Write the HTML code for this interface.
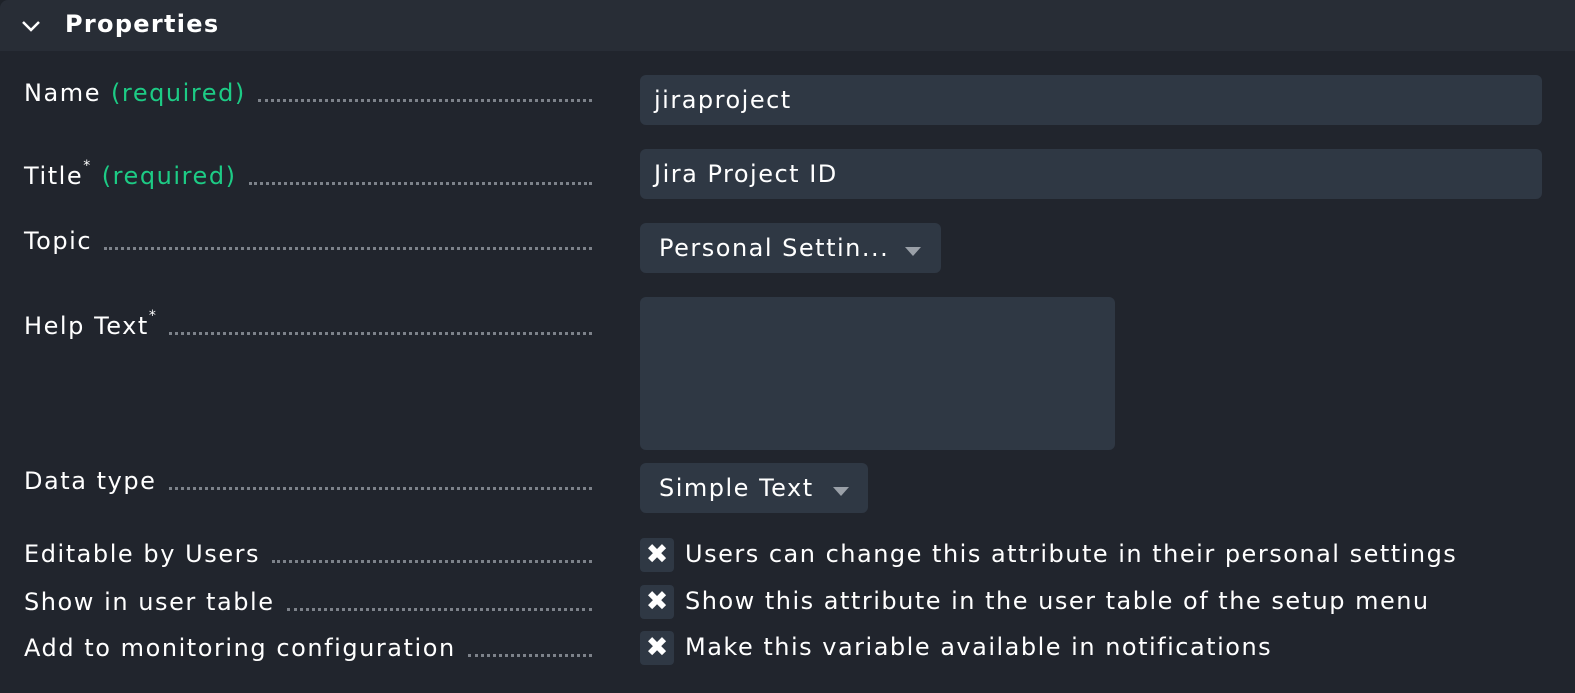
<!DOCTYPE html>
<html><head><style>
body{margin:0;background:#1e2229;width:1575px;height:693px;overflow:hidden;font-family:"DejaVu Sans","Liberation Sans",sans-serif;color:#fff}
.wrap{position:absolute;left:0;top:0;width:1575px;height:693px;background:#21252d;border-radius:8px 0 0 0}
.hdr{position:absolute;left:0;top:0;width:1575px;height:51px;background:#282d36;border-radius:8px 0 0 0}
.hdr .t{position:absolute;left:65px;top:10px;font-size:24px;font-weight:bold;letter-spacing:1.3px}
.lab{position:absolute;left:24px;width:568px;font-size:24px;display:flex;white-space:nowrap;letter-spacing:1.55px}
.lab .d{flex:1;margin-left:12px;border-bottom:3px dotted #7d828a;height:20px}
.g{color:#1dcb85;margin-left:10px}
sup{font-size:14px;position:relative;top:-4px}
.in{position:absolute;left:640px;background:#2f3844;border-radius:6px;font-size:24px;box-sizing:border-box;padding-left:14px;line-height:50px;letter-spacing:1.5px}
.arr{position:absolute;width:0;height:0;border-left:8px solid transparent;border-right:8px solid transparent;border-top:9px solid #9aa0a8}
.cb{position:absolute;left:640px;width:34px;height:34px;background:#2f3844;border-radius:4px;font-size:27px;font-weight:bold;text-align:center;line-height:34px;letter-spacing:0}
.ct{position:absolute;left:685px;font-size:24px;letter-spacing:1.5px}
</style></head><body><div class="wrap">
<div class="hdr"><svg style="position:absolute;left:21px;top:19px" width="20" height="14"><path d="M2 3 L10 11 L18 3" stroke="#fff" stroke-width="2.5" fill="none"/></svg><div class="t">Properties</div></div>
<div class="lab" style="top:79px">Name<span class="g">(required)</span><span class="d"></span></div>
<div class="lab" style="top:162px">Title<sup>*</sup><span class="g">(required)</span><span class="d"></span></div>
<div class="lab" style="top:227px">Topic<span class="d"></span></div>
<div class="lab" style="top:312px">Help Text<sup>*</sup><span class="d"></span></div>
<div class="lab" style="top:467px">Data type<span class="d"></span></div>
<div class="lab" style="top:540px">Editable by Users<span class="d"></span></div>
<div class="lab" style="top:588px">Show in user table<span class="d"></span></div>
<div class="lab" style="top:634px">Add to monitoring configuration<span class="d"></span></div>
<div class="in" style="top:75px;width:902px;height:50px">jiraproject</div>
<div class="in" style="top:149px;width:902px;height:50px">Jira Project ID</div>
<div class="in" style="top:223px;width:301px;height:50px;padding-left:19px">Personal Settin...<div class="arr" style="left:265px;top:24px"></div></div>
<div class="in" style="top:297px;width:475px;height:153px"></div>
<div class="in" style="top:463px;width:228px;height:50px;padding-left:19px">Simple Text<div class="arr" style="left:193px;top:24px"></div></div>
<div class="cb" style="top:538px">✖</div><div class="ct" style="top:540px">Users can change this attribute in their personal settings</div>
<div class="cb" style="top:585px">✖</div><div class="ct" style="top:587px">Show this attribute in the user table of the setup menu</div>
<div class="cb" style="top:631px">✖</div><div class="ct" style="top:633px">Make this variable available in notifications</div>
</div></body></html>
